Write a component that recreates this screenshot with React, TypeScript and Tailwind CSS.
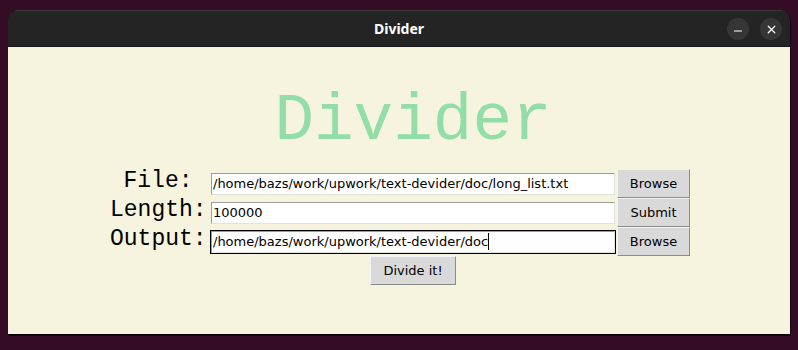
import { Minus, X } from "lucide-react";

const mono = "font-['Liberation_Mono','Courier_New',monospace]";
const sans = "font-['DejaVu_Sans',sans-serif]";

function TkButton({ label }: { label: string }) {
  return (
    <button
      className={`${sans} h-[29px] px-[12px] text-[13px] text-black bg-[#d9d9d9] border border-t-[#f4f4f4] border-l-[#f4f4f4] border-b-[#8c8c8c] border-r-[#8c8c8c]`}
    >
      {label}
    </button>
  );
}

function TkEntry({ value, focused }: { value: string; focused?: boolean }) {
  return (
    <div
      className={`ml-[4px] w-[406px] h-[24px] border ${focused ? "border-black" : "border-[#f6f4de]"}`}
    >
      <div className="h-full w-full bg-white border border-t-[#9c9c9c] border-l-[#9c9c9c] border-b-[#e2e2e2] border-r-[#e2e2e2] flex items-center px-[1px]">
        <span className={`${sans} text-[13px] text-black whitespace-nowrap leading-none`}>{value}</span>
        {focused && <span className="w-px h-[17px] bg-black" />}
      </div>
    </div>
  );
}

function Label({ text }: { text: string }) {
  return (
    <div className={`${mono} text-[23px] leading-[22px] text-black text-center self-start pt-[1px]`}>{text}</div>
  );
}

export default function App() {
  return (
    <div className="w-[798px] h-[350px] bg-[#350c25] pt-[10px] px-[8px]">
      <div className="w-[782px] h-[325px] flex flex-col rounded-t-[10px] overflow-hidden shadow-[1px_1px_0_#120410]">
        <div className="h-[36px] bg-[#242424] border-t border-[#3a3a3a] flex items-center relative shrink-0">
          <div className="flex-1 text-center font-['Noto_Sans',sans-serif] font-bold text-[14px] text-white">Divider</div>
          <div className="absolute right-[8px] top-[7px] flex gap-[11px]">
            <div className="w-[22px] h-[22px] rounded-full bg-[#363636] flex items-center justify-center">
              <Minus className="w-[12px] h-[12px] text-white mt-[4px]" strokeWidth={2.2} />
            </div>
            <div className="w-[22px] h-[22px] rounded-full bg-[#363636] flex items-center justify-center">
              <X className="w-[13px] h-[13px] text-white" strokeWidth={2.4} />
            </div>
          </div>
        </div>
        <div className="h-px bg-[#161616] shrink-0" />
        <div className="flex-1 bg-[#f6f4de] pl-[102px]">
          <div className="grid grid-cols-[96px_410px_75px] grid-rows-[auto_29px_29px_29px_29px] items-center">
            <div />
            <div className={`${mono} text-[66px] leading-none text-[#93dea8] text-center mt-[42px] mb-[14px] pl-[4px]`}>
              Divider
            </div>
            <div />

            <Label text="File:" />
            <TkEntry value="/home/bazs/work/upwork/text-devider/doc/long_list.txt" />
            <div className="flex justify-center">
              <TkButton label="Browse" />
            </div>

            <Label text="Length:" />
            <TkEntry value="100000" />
            <div className="flex justify-center">
              <TkButton label="Submit" />
            </div>

            <Label text="Output:" />
            <TkEntry value="/home/bazs/work/upwork/text-devider/doc" focused />
            <div className="flex justify-center">
              <TkButton label="Browse" />
            </div>

            <div />
            <div className="flex justify-center pl-[4px]">
              <TkButton label="Divide it!" />
            </div>
            <div />
          </div>
        </div>
        <div className="h-px bg-[#0e020a] shrink-0" />
      </div>
    </div>
  );
}
